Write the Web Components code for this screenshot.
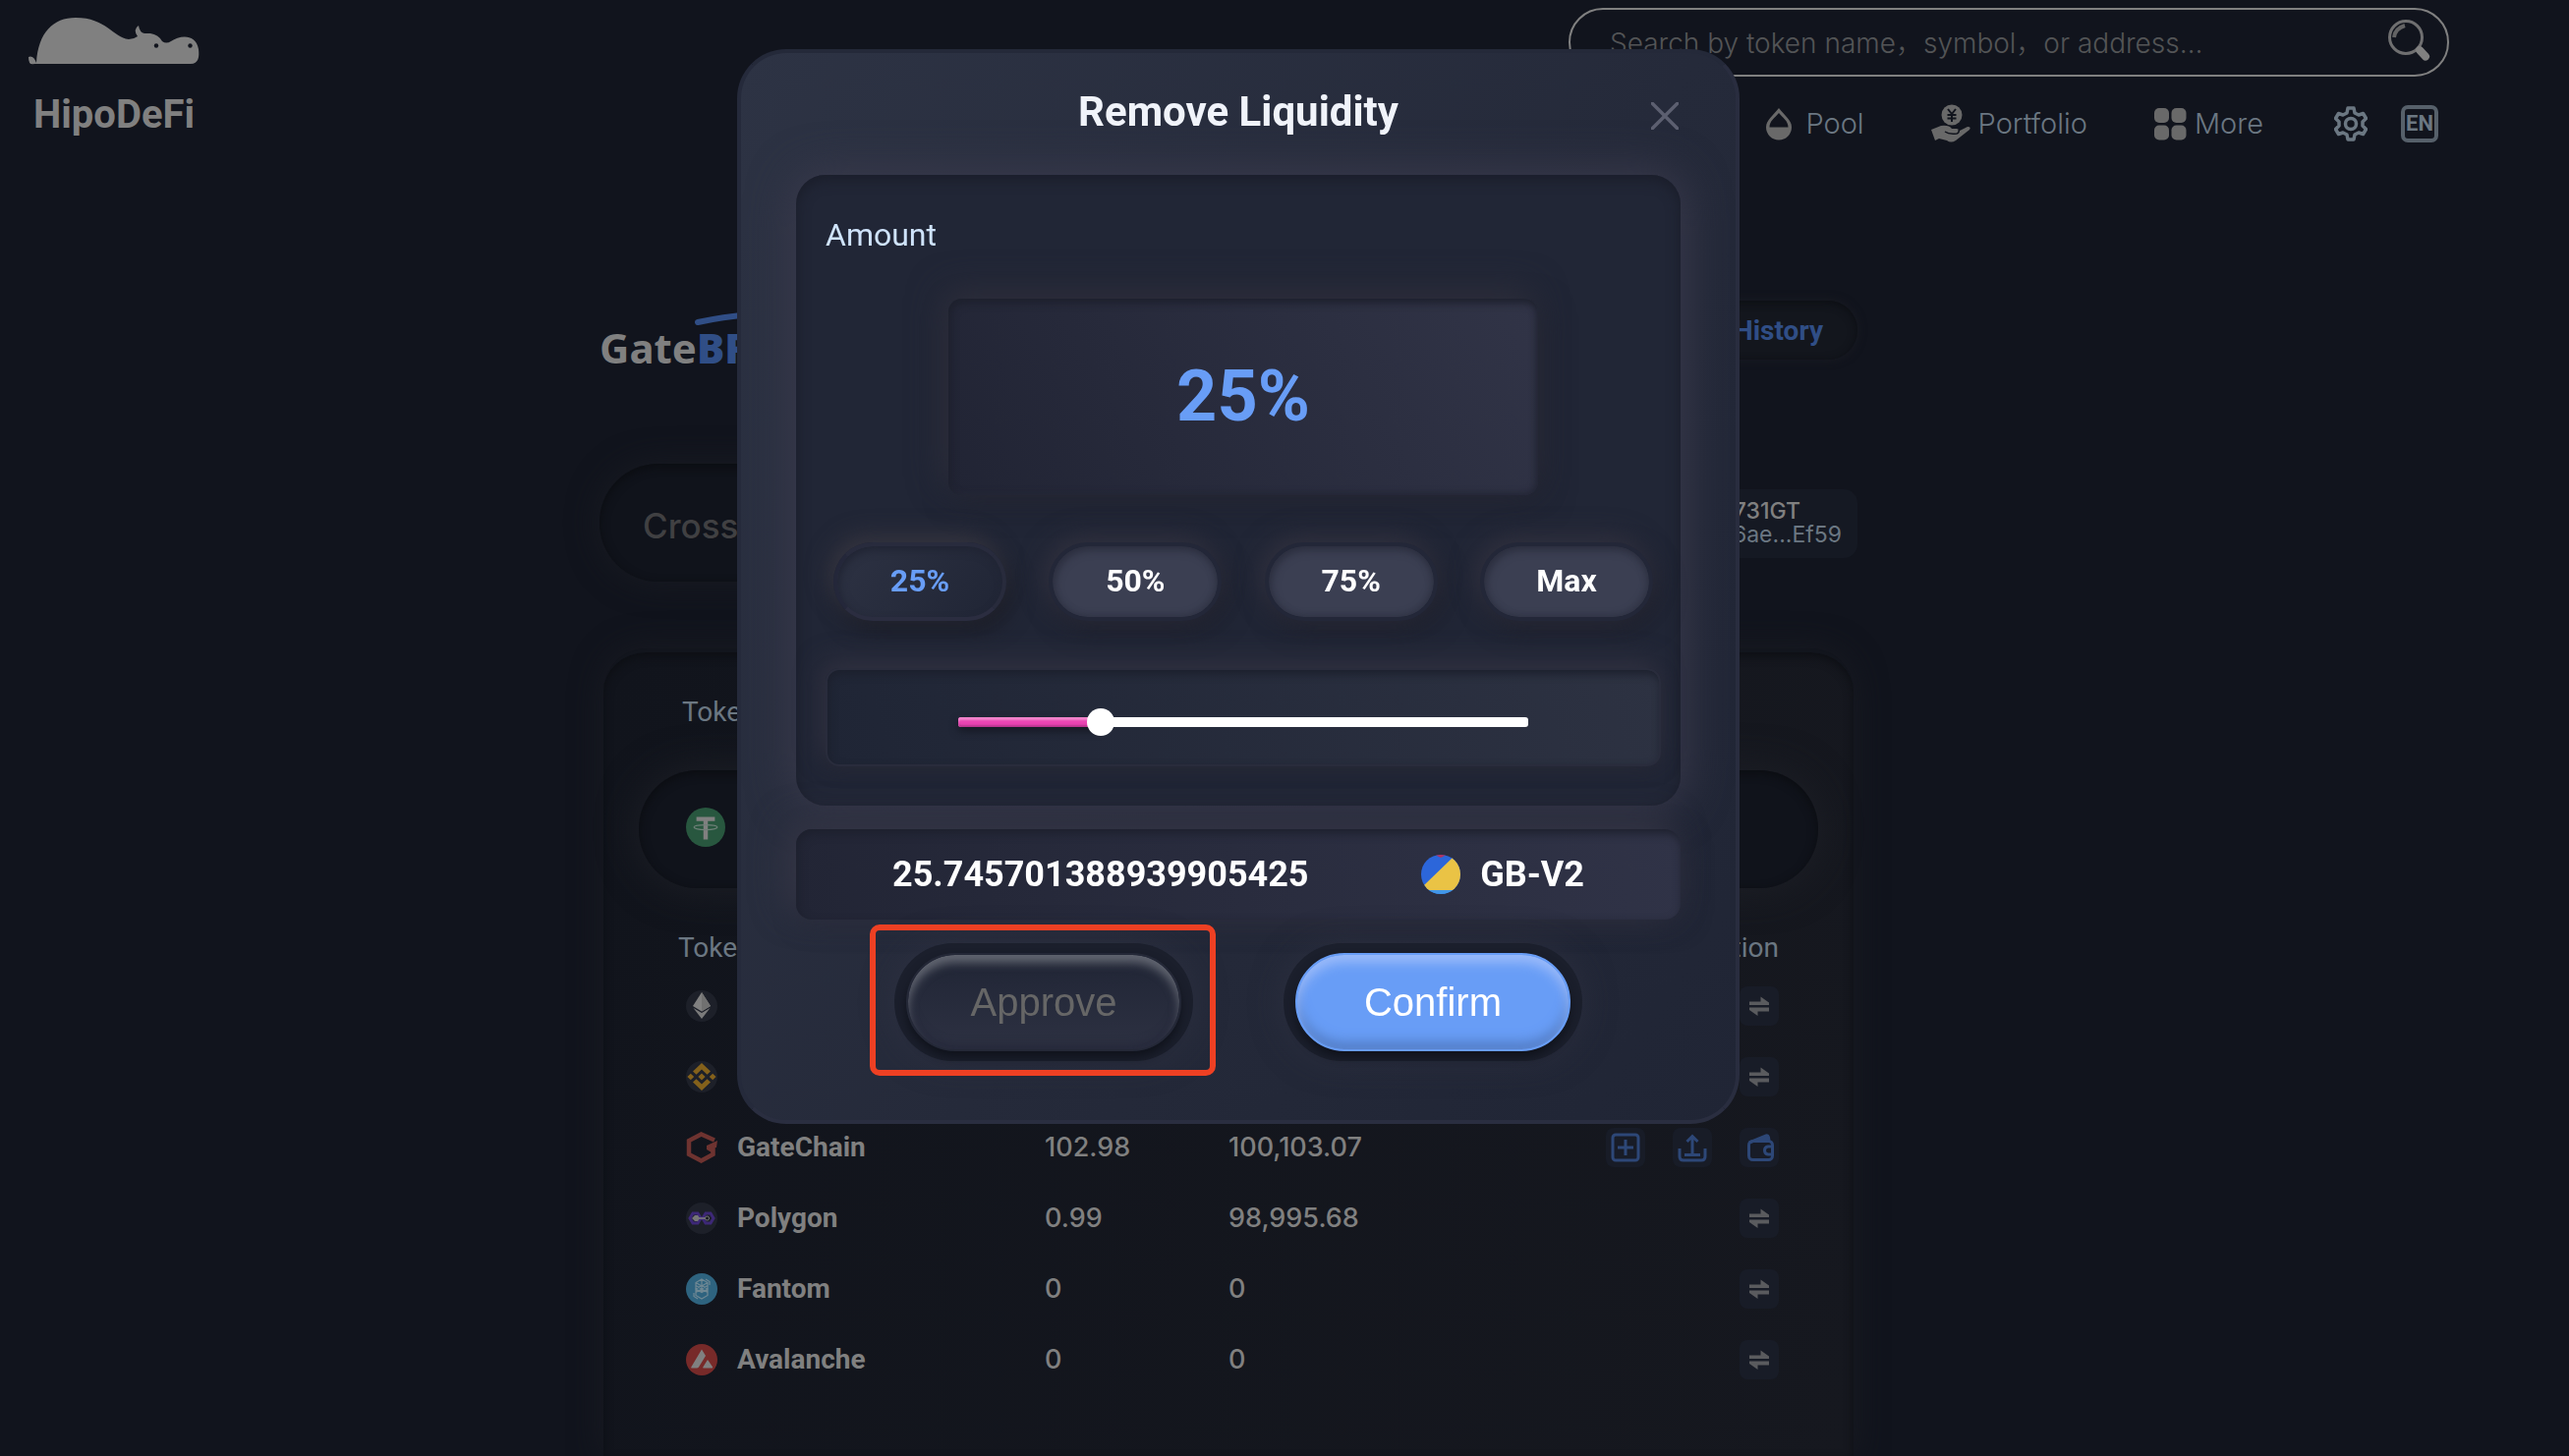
<!DOCTYPE html>
<html lang="en">
<head>
<meta charset="utf-8">
<title>HipoDeFi</title>
<style>
html,body{margin:0;background:#11141d}
body{font-family:Roboto,"Noto Sans CJK SC",sans-serif;font-size:28px;line-height:32px;color:#808080;overflow:hidden}
</style>
</head>
<body>
<hipo-app></hipo-app>
<script>
const define=(name,css,html)=>customElements.define(name,class extends HTMLElement{
  constructor(){
    super();
    const t=document.createElement('template');
    t.innerHTML=`<style>*{box-sizing:border-box}svg{display:block;flex:none}button,input{font:inherit;margin:0}button{cursor:pointer}${css}</style>${typeof html==='function'?html(this):html}`;
    this.attachShadow({mode:'open'}).append(t.content.cloneNode(true));
  }
});

const icons={
  eth:`<circle cx="16" cy="16" r="16" fill="#1d2029"/><path d="M16 2l9 14-9 5.500-9-5.500z" fill="#808080"/><path d="M16 2v19.500l9-5.500z" fill="#717171"/><path d="M7.500 18l8.500 5 8.500-5-8.500 11z" fill="#7b7b7b"/>`,
  bnb:`<circle cx="16" cy="16" r="16" fill="#1d2029"/><g fill="#84611b"><path d="M16 2l9 8.500-3.500 3.200-5.500-5.200-5.500 5.200L7 10.500zM16 30l9-8.500-3.500-3.200-5.500 5.200-5.500-5.200L7 21.500zM16 12.500l3.600 3.500-3.600 3.500-3.600-3.500zM4.800 12.800L8.200 16l-3.400 3.200L1.400 16zM27.200 12.800l3.400 3.200-3.400 3.200-3.400-3.200z"/></g>`,
  gate:`<path d="M29 8.500L15.500 2.500 3 9v14l12.500 6.500L27.500 23V13" fill="none" stroke="#6e3330" stroke-width="4.500"/><path d="M21 14l11-5-1 7-5 .5V21l-5-3z" fill="#6e3330"/>`,
  polygon:`<circle cx="16" cy="16" r="16" fill="#1d2029"/><path d="M7 11h5l3 5-3 5H7l-3-5zM20 11h5l3 5-3 5h-5l-3-5z" fill="none" stroke="#3d2877" stroke-width="3"/><path d="M9 16h13" stroke="#808080" stroke-width="1.500"/><path d="M6 16l3-3h3l2 3-2 3H9z" fill="#777"/><circle cx="21.500" cy="16" r="2" fill="#16181f" stroke="#777"/>`,
  fantom:`<circle cx="16" cy="16" r="16" fill="#2e637f"/><g fill="none" stroke="#6f8894" stroke-width="1.200"><path d="M16 6l6 3.500v13L16 26l-6-3.500v-13zM10 9.500l6 3.500 6-3.500M16 6v7M10 16l6-3.500L22 16l-6 3.500zM16 19v-6M10 12.500l12 7M22 12.500l-12 7M20 6l4 2.500V12M12 26l-4-2.500V20"/></g>`,
  avax:`<circle cx="16" cy="16" r="16" fill="#772a29"/><path d="M16 5.500l4 6.500-7 11.500q-.7 1-2 1H5.800q-1 0-.5-1zM22 16l5 7.300q.4 1.200-.6 1.200h-8.500q-1.200 0-.6-1z" fill="#808080"/>`,
  usdt:`<circle cx="16" cy="16" r="16" fill="#28573f"/><path d="M8.500 7.500h15V11h-5.700v15h-3.600V11H8.500z" fill="#808080"/><ellipse cx="16" cy="16" rx="9.500" ry="2" fill="none" stroke="#6f8078"/>`
};
const acts={
  swap:`<path d="M10 19h20v-2.500L21.500 10.500V15.500H10zM30 21.500H10V24L18.500 30V25.500H30z" fill="#5a5b5e"/>`,
  add:`<g fill="none" stroke="#2d4777" stroke-width="3"><rect x="7" y="7" width="26" height="26" rx="3"/><path d="M12 20h16M20 12v16"/></g>`,
  up:`<g fill="none" stroke="#2d4777" stroke-width="3"><path d="M7 21v8q0 4 4 4h18q4 0 4-4v-8M12 27.500h16M20 27V9M14.500 14L20 8.500l5.500 5.500"/></g>`,
  wallet:`<g fill="none" stroke="#2d4777" stroke-width="3"><rect x="9.500" y="13.500" width="24" height="19" rx="4"/><path d="M10 15L27 8q2-.5 2.500 1.500L30 13M33 19h-4q-3.500.5-3.500 4t3.500 4h4M16 13.500l13-3"/></g>`
};

define('hipo-logo',`:host{display:block;width:174px}
.name{display:block;font-weight:700;font-size:40px;line-height:48px;margin:26px 0 0 5px}`,
`<svg width="176" height="50" viewBox="0 0 176 50"><path d="M0 41q5-2 8 6C10 16 25 1 48 1c31 0 38 20 54 22q5 0 9-3-5-7 1-11 1 7 6 8h6q8 1 12 8 4 3 9 0c9-6 25-8 28 8 1 8 0 15-8 15H6q-6 2-6-7z" fill="#808080"/><circle cx="130" cy="29.500" r="2.200" fill="#11141d"/><circle cx="164.500" cy="29.500" r="2.200" fill="#11141d"/></svg><span class="name">HipoDeFi</span>`);

define('search-box',`:host{display:block;width:896px;max-width:60vw}
label{display:flex;align-items:center;height:70px;border:2px solid #808080;border-radius:35px;padding:0 16px 0 38px}
input{flex:1;min-width:0;background:none;border:0;outline:0;color:#808080;padding:2px 0 0 2px;font-family:Inter,"Noto Sans CJK SC",sans-serif;font-weight:300}
input::placeholder{color:#535456;opacity:1}`,
`<label><input type="text" aria-label="Search tokens" placeholder="Search by token name，symbol，or address…"><svg width="46" height="46" viewBox="0 0 46 46"><circle cx="20" cy="18" r="16.500" fill="none" stroke="#6f6f70" stroke-width="3"/><path d="M8 18q1-9 11-12" fill="none" stroke="#636364" stroke-width="4"/><path d="M31 29l3 3" stroke="#6f6f70" stroke-width="4"/><path d="M34 31l6 6.500" stroke="#808080" stroke-width="8" stroke-linecap="round"/></svg></label>`);

define('top-nav',`:host{display:flex;align-items:center;justify-content:flex-end;gap:34px;padding-right:11px;height:40px;font-family:Inter,sans-serif;font-weight:300;font-size:29px;color:#6b7782}
nav{display:flex;gap:68px;margin-right:38px}
a{display:flex;align-items:center;gap:12px;color:inherit;text-decoration:none}
.tight{gap:8px}
button{display:block;padding:0;border:0;background:none;color:inherit}
.lang{width:38px;height:38px;border:4px solid #56606a;border-radius:7px;font-family:Roboto,sans-serif;font-weight:700;font-size:22px;line-height:30px;text-align:center}`,
`<nav>
<a href="#pool"><svg width="30" height="34" viewBox="0 0 30 34"><path d="M15 1c6 8 13 12 13 19.500a13 13 0 0 1-26 0C2 13 9 9 15 1z" fill="#696969"/><path d="M15 6C11 11 5.500 14 5.500 20.500h19C24.500 14 19 11 15 6z" fill="#11141d"/></svg>Pool</a>
<a href="#portfolio" class="tight"><svg width="40" height="40" viewBox="0 0 40 40"><circle cx="21" cy="11" r="10.500" fill="#696969"/><path d="M17 5l4 5 4-5M21 10v8M16.500 11h9M16.500 14.500h9" fill="none" stroke="#11141d" stroke-width="2"/><path d="M0 26l10-4q8-1 11 3h5q4 1 1 3l10-5q4 0 2 3L25 37q-5 3-9 0l-8-2-4 2z" fill="#696969"/><path d="M14 28q4 3 12 2 3-1 2-4" fill="none" stroke="#11141d" stroke-width="1.500"/></svg>Portfolio</a>
<a href="#more" class="tight"><svg width="33" height="34" viewBox="0 0 33 34"><g fill="#696969"><rect y="1" width="15" height="15" rx="5"/><rect x="17.500" y="1" width="15" height="15" rx="5"/><rect y="18.500" width="15" height="15" rx="5"/><rect x="17.500" y="18.500" width="15" height="15" rx="5"/></g></svg>More</a>
</nav>
<button aria-label="Settings"><svg width="34" height="36" viewBox="0 0 34 36"><path d="M14 2h6l1 5 4 2 4.500-1.500 3 5-3.500 3.500v4l3.500 3.500-3 5L25 27l-4 2-1 5h-6l-1-5-4-2-4.500 1.500-3-5L5 20v-4l-3.500-3.500 3-5L9 9l4-2z" fill="none" stroke="#6b7782" stroke-width="3.500" stroke-linejoin="round"/><circle cx="17" cy="18" r="5.500" fill="none" stroke="#6b7782" stroke-width="3.500"/></svg></button>
<button class="lang">EN</button>`);

define('site-header',`:host{display:flex;justify-content:space-between;align-items:flex-start;padding:8px 8px 0 29px;height:160px}
hipo-logo{margin-top:9px}
.right{display:flex;flex-direction:column;gap:28px}`,
`<hipo-logo></hipo-logo><div class="right"><search-box></search-box><top-nav></top-nav></div>`);

define('bridge-bar',`:host{display:flex;flex-direction:column;gap:106px}
.row{display:flex;justify-content:space-between;align-items:flex-start}
.brand{position:relative;font:700 42px/48px "Noto Sans",sans-serif;padding-top:24px;height:60px}
.brand b{color:#304e86}
.brand svg{position:absolute;left:96px;top:10px}
.history{height:60px;border:0;border-radius:30px;padding:2px 35px 0;background:#13161d;color:#304e86;font-weight:700;box-shadow:inset 0 2px 8px #0c0e13,0 0 10px #1a1c23}
.cross{width:640px;height:120px;border:0;border-radius:60px;background:#10131b;text-align:left;padding:6px 44px 0;color:#404042;font-family:Inter,sans-serif;font-weight:500;font-size:35px;box-shadow:inset 0 3px 10px #0b0d11,0 0 32px #191b22}
.wallet{height:70px;margin-top:26px;border:0;border-radius:14px;background:#151923;color:#808080;font-family:Inter,sans-serif;font-weight:500;font-size:23px;line-height:24px;padding:0 16px 2px;text-align:center}
.wallet span{display:block;font-weight:400;color:#6b7782}`,
`<div class="row"><div class="brand">Gate<b>BR</b><svg width="60" height="16" viewBox="0 0 60 16"><path d="M4 12Q30 6 60 4" fill="none" stroke="#304e86" stroke-width="6" stroke-linecap="round"/></svg></div><button class="history">History</button></div>
<div class="row"><button class="cross">Cross</button><button class="wallet">731GT<span>0x36ae...Ef59</span></button></div>`);

define('chain-name',`:host{display:flex;align-items:center;gap:20px;height:40px;padding-left:8px;font-weight:700}`,
el=>`<svg width="32" height="32" viewBox="0 0 32 32">${icons[el.getAttribute('icon')]}</svg><slot></slot>`);

define('row-action',`:host{display:block}
button{display:block;width:40px;height:40px;padding:0;border:0;border-radius:8px;background:#181c27}`,
el=>`<button aria-label="${el.getAttribute('icon')}"><svg width="40" height="40" viewBox="0 0 40 40">${acts[el.getAttribute('icon')]}</svg></button>`);

const chains=[['eth','','',''],['bnb','','',''],['gate','GateChain','102.98','100,103.07'],['polygon','Polygon','0.99','98,995.68'],['fantom','Fantom','0','0'],['avax','Avalanche','0','0']];
define('token-panel',`:host{display:block;flex:1;margin:0 4px;border-top:4px solid #12151d;border-radius:44px 44px 0 0;padding:45px 36px 0;background:linear-gradient(100deg,#11141c,#16181f);box-shadow:inset 0 4px 10px #0d0f14,0 0 32px #191b22}
.label{margin-left:44px;color:#6b7782}
.token{display:flex;align-items:center;height:120px;margin:43px 0 45px;padding:0 0 4px 48px;border-radius:60px;background:#10131b;box-shadow:inset 0 3px 10px #0b0d11,0 0 40px #1e2027}
table{border-collapse:collapse;table-layout:fixed;width:calc(100% - 80px);margin-left:40px}
th{height:39px;padding:0 0 7px;font-weight:400;text-align:left;color:#6b7782}
th:last-child{text-align:right}
td{height:72px;padding:0}
.n{font-family:Inter,sans-serif;font-weight:500;font-size:27px}
.acts{display:flex;justify-content:flex-end;gap:28px}
.c1{width:373px}.c2{width:187px}`,
`<div class="label">Token</div>
<div class="token"><svg width="40" height="40" viewBox="0 0 32 32">${icons.usdt}</svg></div>
<table><colgroup><col class="c1"><col class="c2"><col><col></colgroup><thead><tr><th>Token</th><th></th><th></th><th>Action</th></tr></thead><tbody>
${chains.map(([i,n,a,b])=>`<tr><td><chain-name icon="${i}">${n}</chain-name></td><td class="n">${a}</td><td class="n">${b}</td><td><div class="acts">${(i==='gate'?['add','up','wallet']:['swap']).map(k=>`<row-action icon="${k}"></row-action>`).join('')}</div></td></tr>`).join('')}
</tbody></table>`);

define('percent-pill',`:host{display:block}
button{display:block;width:176px;height:80px;padding:0 0 2px;border:4px solid #232738;border-radius:40px;background:#3b3f52;background-clip:padding-box;color:#fff;font-weight:700;font-size:32px;box-shadow:inset 2px 4px 8px #2b2e3e,inset -2px -2px 6px #323647,-4px -6px 26px #31313f,6px 10px 26px #1e202c}
:host([active]) button{background:linear-gradient(125deg,#2d3243,#202535);border-color:#282b3d #282b3c #2b2d40 #24273a;color:#689df6;box-shadow:inset 2px 4px 8px #202433,-5px -8px 22px #34343f,6px 10px 22px #1b1d27}`,
`<button><slot></slot></button>`);

define('amount-slider',`:host{display:grid;place-items:center;height:100px;padding-top:10px;border:2px solid #292c3c;border-radius:14px;background:linear-gradient(70deg,#1f2535,#2d3242);box-shadow:inset 2px 4px 8px #1c202d,-4px -8px 26px #303140,0 4px 16px #222532}
.track,input{grid-area:1/1}
.track{width:580px;height:10px;border-radius:3px;background:#fff}
.fill{width:25%;height:10px;border-radius:3px;background:#ea44b3;box-shadow:inset 0 3px 2px #f084cb,inset 0 -2px 2px #b9358f,0 4px 8px #151823}
input{width:608px;height:28px;appearance:none;background:none}
input::-webkit-slider-thumb{appearance:none;width:28px;height:28px;border-radius:50%;background:#fff}`,
`<div class="track"><div class="fill"></div></div><input type="range" min="0" max="100" value="25" aria-label="Amount percent">`);

define('amount-panel',`:host{display:flex;flex-direction:column;height:642px;padding:45px 20px 40px 30px;border-radius:30px;background:#212636;box-shadow:inset 0 4px 14px #1a1d29,0 0 44px 4px #3a3a4c}
.label{font-size:32px;line-height:32px;color:#cfe3fb}
.value{width:600px;height:200px;margin:49px auto 48px;border-radius:14px;display:grid;place-items:center;font-weight:700;font-size:72px;color:#689df6;background:linear-gradient(60deg,#212434,#313447);box-shadow:inset 2px 4px 8px #1d202c,inset -2px -2px 6px #262939,-6px -10px 34px #2d2e3b,6px 8px 30px #202330}
.pills{display:flex;justify-content:space-between;padding:0 8px;margin-bottom:48px}`,
`<div class="label">Amount</div><div class="value">25%</div>
<div class="pills"><percent-pill active>25%</percent-pill><percent-pill>50%</percent-pill><percent-pill>75%</percent-pill><percent-pill>Max</percent-pill></div>
<amount-slider></amount-slider>`);

define('receive-row',`:host{display:flex;align-items:center;justify-content:space-between;height:92px;margin:24px 0;padding:0 98px;border-radius:16px;font-weight:700;font-size:36px;color:#fff;background:linear-gradient(80deg,#222535,#303347);box-shadow:inset 2px 4px 10px #1d202d,-10px -8px 34px #353646,4px 4px 26px #242736}
.pair{display:flex;align-items:center;gap:20px}`,
`<span><slot></slot></span><span class="pair"><svg width="40" height="40" viewBox="0 0 40 40"><clipPath id="c"><circle cx="20" cy="20" r="20"/></clipPath><g clip-path="url(#c)"><path d="M0 0h40v40H0z" fill="#2c66da"/><path d="M32 3L3 31l3 5h34V6z" fill="#eac345"/><path d="M6 36h34v4H6z" fill="#4297e8"/><path d="M14 0h12l-6 3z" fill="#b5325f"/></g></svg><slot name="pair"></slot></span>`);

define('deep-button',`:host{display:block;position:relative;padding:10px 12px;border-radius:60px;background:#1b1f2c;box-shadow:0 0 32px #34354580}
button{display:block;width:280px;height:100px;border-radius:50px;border:2px solid #689df6;background:#689df6;color:#fff;font:40px/44px "Liberation Sans",sans-serif;box-shadow:inset 0 8px 12px #9abafa,inset 0 -8px 12px #547fc9,0 6px 10px #10131c}
:host([muted]) button{border-color:#242837;background:linear-gradient(#202535,#2d3142);color:#666;box-shadow:inset 0 8px 10px #616570,inset 0 -4px 10px #25283a,0 6px 10px #10131c}
:host([marked])::after{content:"";position:absolute;inset:-19px -23px -15px -25px;border:6px solid #ee4023;border-radius:10px;pointer-events:none}`,
`<div><button><slot></slot></button></div>`);

define('liquidity-dialog',`:host{display:block;width:1020px;max-width:92vw;padding:0 56px 60px;border:4px solid;border-color:#242939 #292d3f #2a2e40 #252a3b;border-radius:50px;background:linear-gradient(125deg,#2d3344,#252a3a 55%,#202535)}
header{display:flex;align-items:center;height:124px;padding-right:2px}
h2{flex:1;margin:0 -30px 4px 0;text-align:center;font-size:42px;line-height:48px;font-weight:700;color:#f0f3fa}
header button{padding:0;border:0;background:none;margin-top:4px}
.actions{display:flex;justify-content:center;gap:92px}`,
`<header><h2>Remove Liquidity</h2><button aria-label="Close"><svg width="28" height="28" viewBox="0 0 28 28"><path d="M1 1l26 26M27 1L1 27" stroke="#5c5f70" stroke-width="3.500" stroke-linecap="round"/></svg></button></header>
<amount-panel></amount-panel>
<receive-row>25.745701388939905425<span slot="pair">GB-V2</span></receive-row>
<div class="actions"><deep-button muted marked>Approve</deep-button><deep-button>Confirm</deep-button></div>`);

define('hipo-app',`:host{display:block}
.page{display:flex;flex-direction:column;height:100vh;padding-right:114px;overflow:hidden}
main{flex:1;display:flex;flex-direction:column;gap:68px;width:1280px;max-width:100%;margin:146px auto 0}
.overlay{position:fixed;inset:0;display:flex;justify-content:center;align-items:flex-start;padding:50px 94px 0 0}`,
`<div class="page"><site-header></site-header><main><bridge-bar></bridge-bar><token-panel></token-panel></main></div>
<div class="overlay"><liquidity-dialog role="dialog" aria-label="Remove Liquidity"></liquidity-dialog></div>`);
</script>
</body>
</html>
